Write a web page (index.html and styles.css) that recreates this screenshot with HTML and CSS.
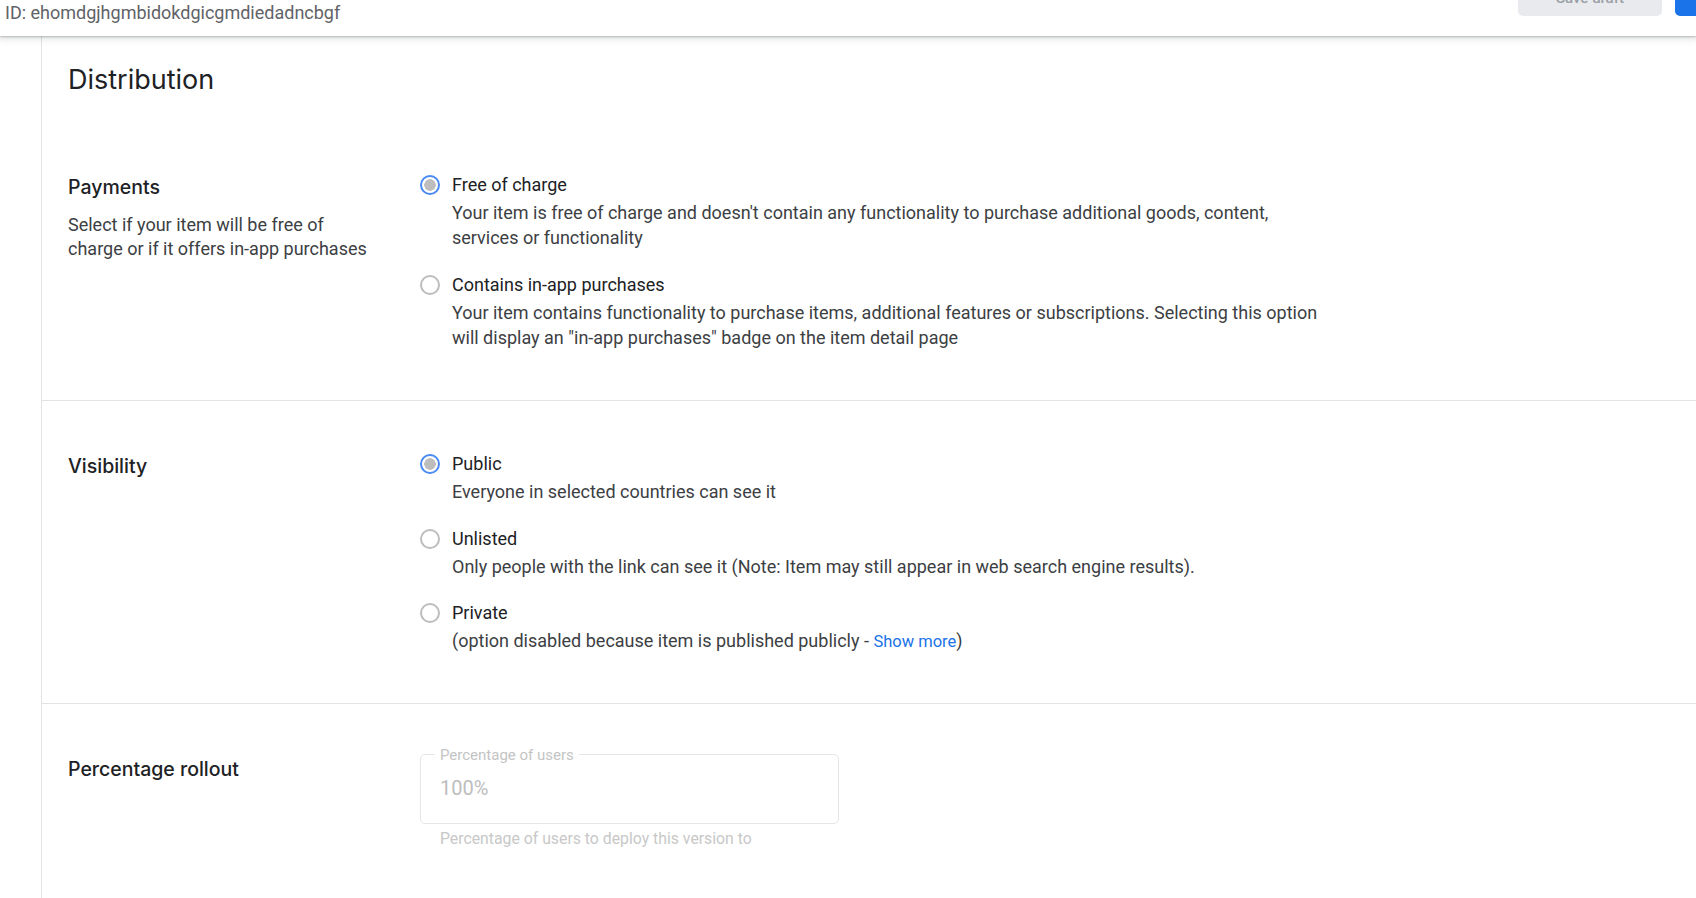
FILE: index.html
```html
<!DOCTYPE html>
<html lang="en">
<head>
<meta charset="utf-8">
<title>Distribution</title>
<link rel="stylesheet" href="styles.css">
</head>
<body>
<header class="topbar">
  <div class="item-id">ID: ehomdgjhgmbidokdgicgmdiedadncbgf</div>
  <div class="actions">
    <button class="btn btn-draft">Save draft</button>
    <button class="btn btn-primary">Submit for review</button>
  </div>
</header>
<div class="layout">
  <aside class="rail"></aside>
  <main class="content">
    <h1 class="page-title">Distribution</h1>

    <section class="section section-pay">
      <div class="section-head">
        <h2 class="section-title">Payments</h2>
        <p class="section-desc">Select if your item will be free of charge or if it offers in-app purchases</p>
      </div>
      <div class="options">
        <div class="option">
          <span class="radio checked"></span>
          <div class="option-text">
            <div class="option-label">Free of charge</div>
            <div class="option-desc">Your item is free of charge and doesn't contain any functionality to purchase additional goods, content, services or functionality</div>
          </div>
        </div>
        <div class="option">
          <span class="radio"></span>
          <div class="option-text">
            <div class="option-label">Contains in-app purchases</div>
            <div class="option-desc">Your item contains functionality to purchase items, additional features or subscriptions. Selecting this option will display an "in-app purchases" badge on the item detail page</div>
          </div>
        </div>
      </div>
    </section>

    <section class="section section-vis">
      <div class="section-head">
        <h2 class="section-title">Visibility</h2>
      </div>
      <div class="options options-tight">
        <div class="option">
          <span class="radio checked"></span>
          <div class="option-text">
            <div class="option-label">Public</div>
            <div class="option-desc">Everyone in selected countries can see it</div>
          </div>
        </div>
        <div class="option">
          <span class="radio"></span>
          <div class="option-text">
            <div class="option-label">Unlisted</div>
            <div class="option-desc">Only people with the link can see it (Note: Item may still appear in web search engine results).</div>
          </div>
        </div>
        <div class="option">
          <span class="radio"></span>
          <div class="option-text">
            <div class="option-label">Private</div>
            <div class="option-desc">(option disabled because item is published publicly - <a class="link" href="#">Show more</a>)</div>
          </div>
        </div>
      </div>
    </section>

    <section class="section section-last">
      <div class="section-head">
        <h2 class="section-title section-title-wide">Percentage rollout</h2>
      </div>
      <div class="field-wrap">
        <fieldset class="field">
          <legend class="field-label">Percentage of users</legend>
          <div class="field-value">100%</div>
        </fieldset>
        <div class="field-help">Percentage of users to deploy this version to</div>
      </div>
    </section>
  </main>
</div>
</body>
</html>
```
FILE: styles.css
```css
* { box-sizing: border-box; }

html, body {
  margin: 0;
  padding: 0;
  background: #ffffff;
  height: 100%;
  overflow: hidden;
}

body {
  font-family: Roboto, "Liberation Sans", Arial, sans-serif;
  color: #3c4043;
}

.topbar {
  position: relative;
  z-index: 2;
  height: 36px;
  display: flex;
  align-items: flex-start;
  justify-content: space-between;
  background: #ffffff;
  box-shadow: 0 1px 2px rgba(60, 64, 67, 0.3), 0 2px 6px 2px rgba(60, 64, 67, 0.12);
}

.item-id {
  padding: 2px 0 0 5px;
  font-size: 18px;
  line-height: 22px;
  color: #5f6368;
}

.actions {
  display: flex;
  gap: 13px;
  margin-top: -20px;
}

.btn {
  height: 36px;
  border: none;
  border-radius: 5px;
  font-family: Roboto, "Liberation Sans", Arial, sans-serif;
  font-size: 15px;
  font-weight: 500;
  padding: 0 24px;
}

.btn-draft {
  width: 144px;
  background: #e8eaed;
  color: #9aa0a6;
}

.btn-primary {
  width: 160px;
  margin-right: -139px;
  background: #1a73e8;
  color: #ffffff;
}

.layout {
  display: flex;
  height: calc(100% - 36px);
}

.rail {
  width: 42px;
  flex: none;
  border-right: 1px solid #e3e3e3;
}

.content {
  flex: 1;
}

.page-title {
  margin: 0;
  padding: 26px 0 0 26px;
  height: 86px;
  font-family: Inter, "Open Sans", sans-serif;
  font-weight: 400;
  font-size: 27px;
  line-height: 36px;
  color: #202124;
}

.section {
  display: grid;
  grid-template-columns: 352px 1fr;
  padding: 51px 0 50px 26px;
  border-bottom: 1px solid #e3e3e3;
}

.section-vis {
  padding-bottom: 48px;
}

.section-last {
  border-bottom: none;
}

.section-title {
  margin: 0;
  font-family: Inter, "Open Sans", sans-serif;
  font-weight: 500;
  font-size: 19.5px;
  line-height: 28px;
  color: #202124;
}

.section-title-wide {
  font-size: 19.5px;
}

.section-desc {
  margin: 12px 0 0;
  max-width: 306px;
  font-size: 18px;
  line-height: 23.5px;
  color: #3c4043;
}

.options {
  display: flex;
  flex-direction: column;
  gap: 23px;
}

.options-tight {
  gap: 22px;
}

.option {
  display: flex;
  gap: 12px;
  align-items: flex-start;
}

.radio {
  flex: none;
  width: 20px;
  height: 20px;
  margin-top: 2px;
  border-radius: 50%;
  border: 2px solid #bdbdbd;
  background: #ffffff;
}

.radio.checked {
  border-color: #4a8af4;
  background: radial-gradient(circle, #bdbdbd 0 5.5px, #ffffff 6px);
}

.option-text {
  max-width: 880px;
}

.option-label {
  font-size: 18px;
  line-height: 24px;
  color: #202124;
  margin-bottom: 4px;
}

.option-desc {
  font-size: 18px;
  line-height: 24.5px;
  color: #3c4043;
}

.link {
  color: #1a73e8;
  text-decoration: none;
  font-size: 16.5px;
}

.field-wrap {
  width: 419px;
  margin-top: -8px;
}

.field {
  margin: 0;
  padding: 0 19px 0 19px;
  height: 77px;
  border: 1px solid #e6e6e6;
  border-radius: 5px;
}

.field-label {
  padding: 0 5px;
  margin-left: -5px;
  font-size: 15px;
  line-height: 16px;
  color: #c4c4c4;
}

.field-value {
  padding-top: 13px;
  font-size: 20px;
  line-height: 24px;
  color: #bdbdbd;
}

.field-help {
  padding: 6px 0 0 20px;
  font-size: 15.8px;
  line-height: 18px;
  color: #c8c8c8;
}
```
